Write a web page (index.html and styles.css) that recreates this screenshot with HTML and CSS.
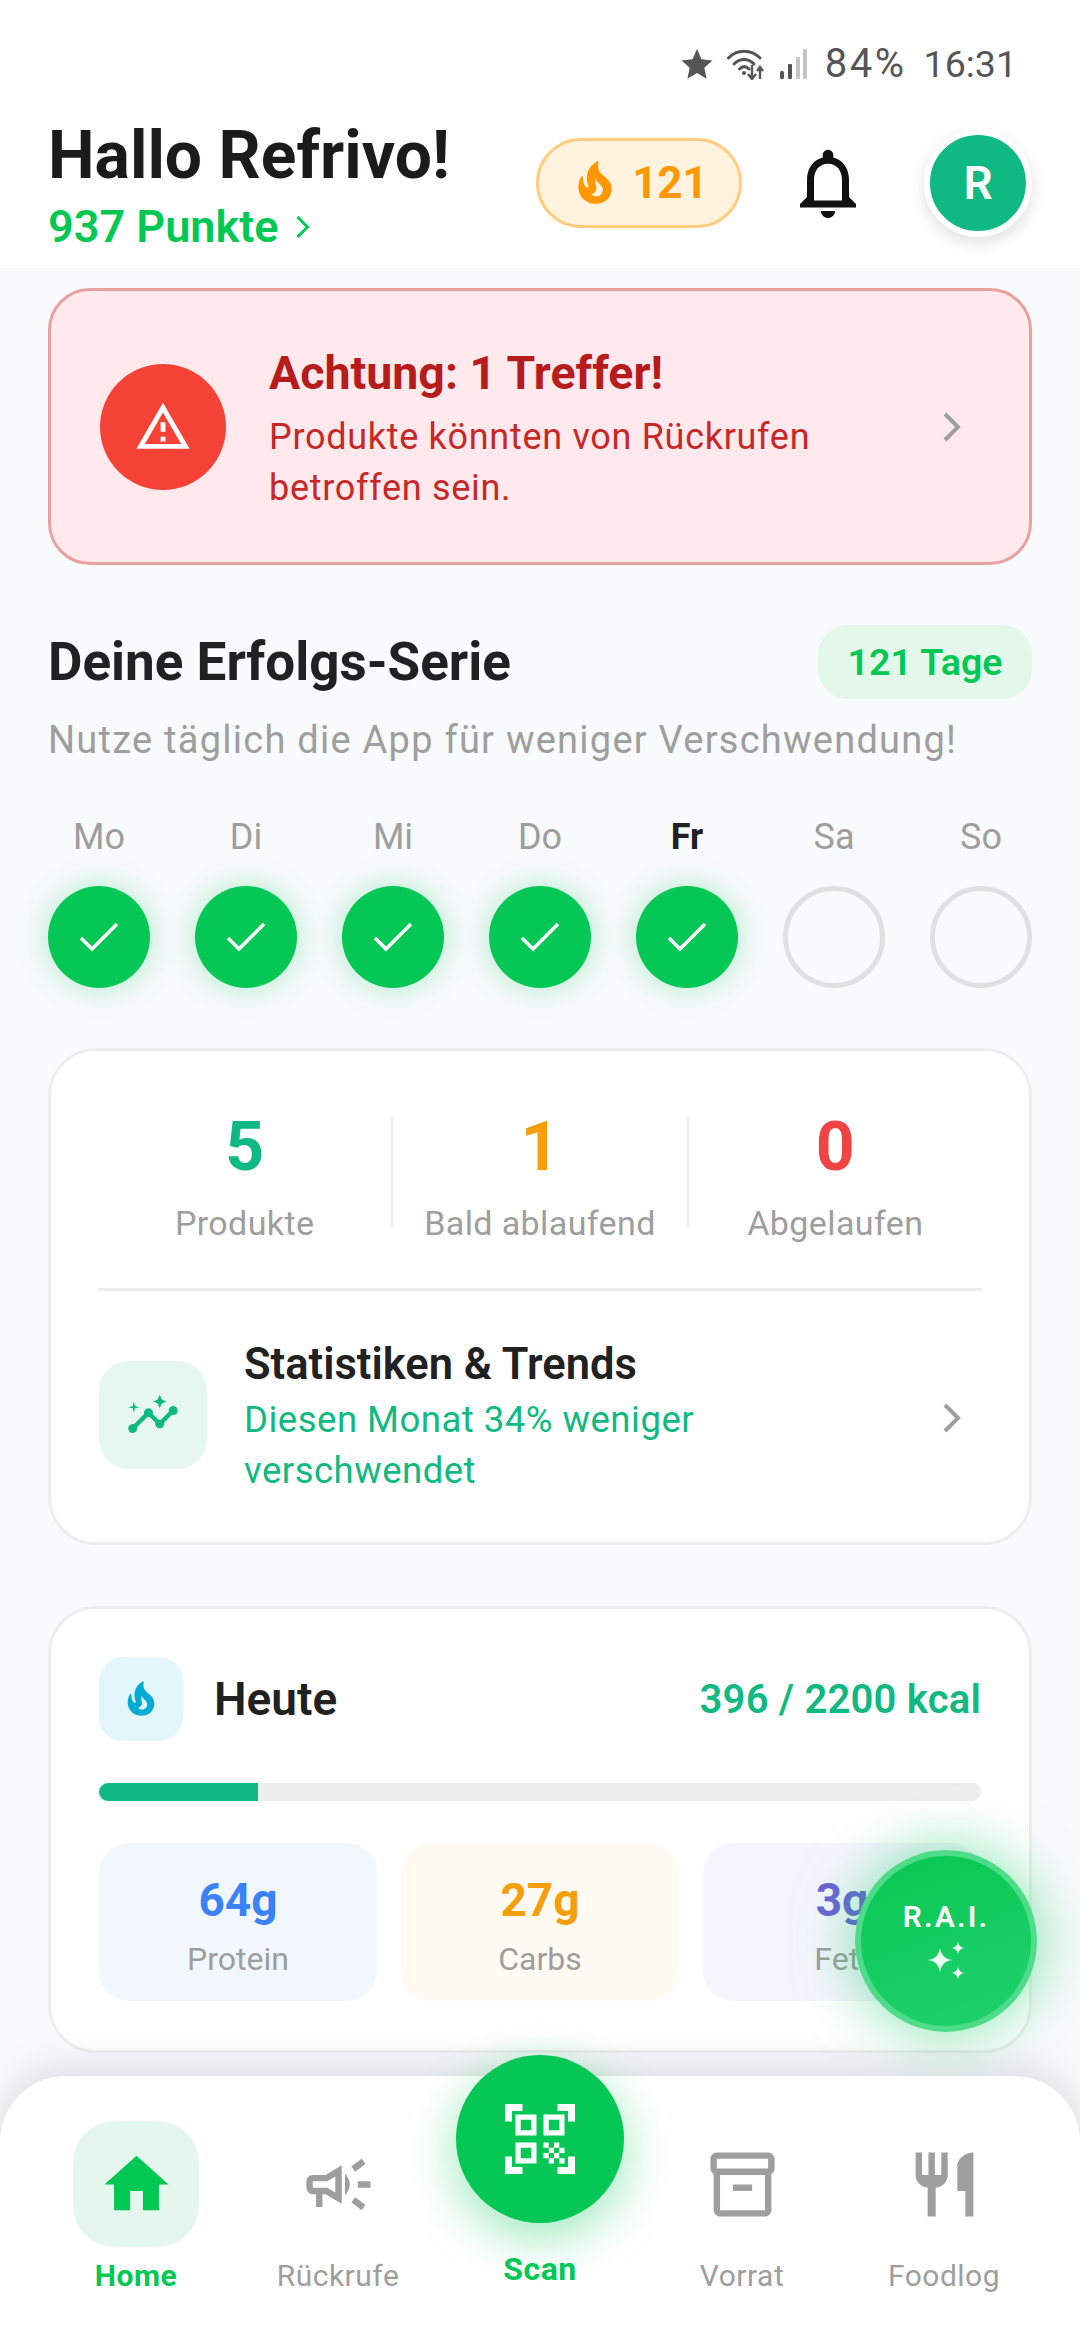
FILE: index.html
```html
<!DOCTYPE html>
<html lang="de">
<head>
<meta charset="utf-8">
<title>Refrivo Home</title>
<link rel="stylesheet" href="styles.css">
</head>
<body>
<div class="screen">
  <header class="header">
    <div class="status">
      <svg class="st-star" viewBox="0 0 24 24"><path d="M12 .8l3.4 7.6 8.2.9-6.1 5.5 1.7 8.2-7.2-4.2-7.2 4.2 1.7-8.2L.4 9.3l8.2-.9z"/></svg>
      <svg class="st-wifi" viewBox="0 0 38 32"><g fill="none" stroke="#555" stroke-width="3" stroke-linecap="round"><path d="M1.500 10C10 1 24 1 33 10"/><path d="M7 16c6-6 14-6 20 0"/><path d="M12.500 21c3-3 6.500-3 9.500 0"/></g><circle cx="17" cy="25" r="2" fill="#555"/><path d="M25 17v13M21 26l4 5 4-5M33 31V20M30 23l3-4 3 4" fill="none" stroke="#555" stroke-width="2.400"/></svg>
      <svg class="st-bars" viewBox="0 0 27 30"><rect x="0" y="22" width="4" height="8" rx="1.500" fill="#555"/><rect x="8" y="15" width="4" height="15" rx="1" fill="#555"/><rect x="16" y="8" width="4" height="22" rx="1" fill="#c4c4c4"/><rect x="23" y="0" width="4" height="30" rx="1" fill="#c4c4c4"/></svg>
      <span class="st-text st-batt">84%</span>
      <span class="st-text st-time">16:31</span>
    </div>
    <div class="top">
      <div class="hello">
        <h1 class="hello-title">Hallo Refrivo!</h1>
        <div class="points">937 Punkte
          <svg class="points-chev" viewBox="0 0 14 24"><path d="M2 2l10 10L2 22"/></svg>
        </div>
      </div>
      <div class="top-right">
        <div class="streak">
          <svg class="streak-flame" viewBox="0 0 24 24"><path d="M19.480 12.350c-1.570-4.080-7.160-4.300-5.810-10.230.1-.44-.37-.78-.75-.55C9.290 3.710 6.680 8 8.870 13.620c.18.46-.36.89-.75.59-1.810-1.370-2-3.340-1.840-4.750.06-.52-.62-.77-.91-.34C4.690 10.160 4 11.840 4 14.370c.38 5.600 5.110 7.320 6.810 7.540 2.430.31 5.060-.14 6.950-1.870 2.080-1.930 2.840-5.010 1.720-7.690zm-9.280 5.030c1.440-.35 2.180-1.390 2.380-2.310.33-1.430-.96-2.830-.09-5.090.33 1.870 3.270 3.040 3.270 5.080.08 2.530-2.660 4.700-5.560 2.320z"/></svg>
          <span>121</span>
        </div>
        <svg class="bell" viewBox="0 0 24 24"><path d="M12 22c1.100 0 2-.9 2-2h-4c0 1.100.9 2 2 2zm6-6v-5c0-3.070-1.640-5.640-4.500-6.320V4c0-.83-.67-1.500-1.500-1.500s-1.500.67-1.500 1.500v.68C7.630 5.360 6 7.920 6 11v5l-2 2v1h16v-1l-2-2zm-2 1H8v-6c0-2.480 1.510-4.500 4-4.500s4 2.020 4 4.500v6z"/></svg>
        <div class="avatar">R</div>
      </div>
    </div>
  </header>

  <main class="content">
    <section class="alert">
      <div class="alert-icon">
        <svg viewBox="0 0 24 24"><path d="M12 5.990L19.530 19H4.470L12 5.990M12 2L1 21h22L12 2zm1 14h-2v2h2v-2zm0-6h-2v4h2v-4z"/></svg>
      </div>
      <div class="alert-body">
        <div class="alert-title">Achtung: 1 Treffer!</div>
        <div class="alert-text">Produkte könnten von Rückrufen betroffen sein.</div>
      </div>
      <svg class="chev" viewBox="0 0 20 32"><path d="M3 3l13 13L3 29"/></svg>
    </section>

    <section class="streak-sec">
      <div class="sec-head">
        <h2 class="sec-title">Deine Erfolgs-Serie</h2>
        <div class="sec-badge">121 Tage</div>
      </div>
      <p class="sec-sub">Nutze täglich die App für weniger Verschwendung!</p>
      <div class="days">
        <div class="day"><span class="day-label">Mo</span><span class="day-dot done"><svg viewBox="0 0 40 30"><path d="M2 16l11 11L38 2"/></svg></span></div>
        <div class="day"><span class="day-label">Di</span><span class="day-dot done"><svg viewBox="0 0 40 30"><path d="M2 16l11 11L38 2"/></svg></span></div>
        <div class="day"><span class="day-label">Mi</span><span class="day-dot done"><svg viewBox="0 0 40 30"><path d="M2 16l11 11L38 2"/></svg></span></div>
        <div class="day"><span class="day-label">Do</span><span class="day-dot done"><svg viewBox="0 0 40 30"><path d="M2 16l11 11L38 2"/></svg></span></div>
        <div class="day"><span class="day-label today">Fr</span><span class="day-dot done"><svg viewBox="0 0 40 30"><path d="M2 16l11 11L38 2"/></svg></span></div>
        <div class="day"><span class="day-label">Sa</span><span class="day-dot"></span></div>
        <div class="day"><span class="day-label">So</span><span class="day-dot"></span></div>
      </div>
    </section>

    <section class="card stats-card">
      <div class="stats">
        <div class="stat"><div class="stat-num c-green">5</div><div class="stat-label">Produkte</div></div>
        <div class="stat"><div class="stat-num c-amber">1</div><div class="stat-label">Bald ablaufend</div></div>
        <div class="stat"><div class="stat-num c-red">0</div><div class="stat-label">Abgelaufen</div></div>
      </div>
      <div class="trend">
        <div class="trend-icon">
          <svg viewBox="0 0 24 24"><path d="M21 8c-1.450 0-2.260 1.440-1.930 2.510l-3.550 3.560c-.3-.09-.74-.09-1.040 0l-2.550-2.550C12.270 10.450 11.460 9 10 9c-1.450 0-2.270 1.440-1.930 2.520l-4.560 4.550C2.440 15.740 1 16.550 1 18c0 1.100.9 2 2 2 1.450 0 2.260-1.440 1.930-2.510l4.550-4.560c.3.09.74.09 1.040 0l2.550 2.550C12.730 16.550 13.540 18 15 18c1.450 0 2.270-1.440 1.930-2.520l3.560-3.550c1.070.33 2.510-.48 2.510-1.930 0-1.100-.9-2-2-2z"/><path d="M15 9l.94-2.070L18 6l-2.060-.93L15 3l-.92 2.070L12 6l2.080.93z"/><path d="M3.500 11L4 9l2-.5L4 8l-.5-2L3 8l-2 .5L3 9z"/></svg>
        </div>
        <div class="trend-body">
          <div class="trend-title">Statistiken &amp; Trends</div>
          <div class="trend-text">Diesen Monat 34% weniger verschwendet</div>
        </div>
        <svg class="chev" viewBox="0 0 20 32"><path d="M3 3l13 13L3 29"/></svg>
      </div>
    </section>

    <section class="card today-card">
      <div class="today-head">
        <div class="today-icon">
          <svg viewBox="0 0 24 24"><path d="M19.480 12.350c-1.570-4.080-7.160-4.300-5.810-10.230.1-.44-.37-.78-.75-.55C9.290 3.710 6.680 8 8.870 13.620c.18.46-.36.89-.75.59-1.810-1.370-2-3.340-1.840-4.750.06-.52-.62-.77-.91-.34C4.690 10.160 4 11.840 4 14.370c.38 5.600 5.110 7.320 6.810 7.540 2.430.31 5.060-.14 6.950-1.870 2.080-1.930 2.840-5.010 1.720-7.690zm-9.280 5.030c1.440-.35 2.180-1.390 2.380-2.310.33-1.430-.96-2.830-.09-5.090.33 1.870 3.270 3.040 3.270 5.080.08 2.530-2.660 4.700-5.560 2.320z"/></svg>
        </div>
        <div class="today-title">Heute</div>
        <div class="today-kcal">396 / 2200 kcal</div>
      </div>
      <div class="bar"><div class="bar-fill" style="width:18%"></div></div>
      <div class="tiles">
        <div class="tile t-blue"><div class="tile-num">64g</div><div class="tile-label">Protein</div></div>
        <div class="tile t-amber"><div class="tile-num">27g</div><div class="tile-label">Carbs</div></div>
        <div class="tile t-purple"><div class="tile-num">3g</div><div class="tile-label">Fett</div></div>
      </div>
    </section>
  </main>

  <button class="fab" type="button">
    <span class="fab-text">R.A.I.</span>
    <svg class="fab-icon" viewBox="0 0 40 44"><path d="M14 8c1.500 7.500 5 11 12 12-7 1-10.500 4.500-12 12-1.500-7.500-5-11-12-12 7-1 10.500-4.500 12-12z"/><path d="M32 2c.7 3.500 2.500 5.300 6 6-3.500.7-5.300 2.500-6 6-.7-3.500-2.500-5.300-6-6 3.500-.7 5.300-2.500 6-6z"/><path d="M32 27c.7 3.500 2.500 5.300 6 6-3.500.7-5.300 2.500-6 6-.7-3.500-2.500-5.300-6-6 3.500-.7 5.300-2.500 6-6z"/></svg>
  </button>

  <nav class="nav">
    <div class="nav-item active">
      <span class="nav-pill"><svg viewBox="0 0 24 24"><path d="M10 20v-6h4v6h5v-8h3L12 3 2 12h3v8z"/></svg></span>
      <span class="nav-label">Home</span>
    </div>
    <div class="nav-item">
      <span class="nav-pill"><svg viewBox="0 0 24 24"><path d="M18 11v2h4v-2h-4zm-2 6.610c.96.71 2.210 1.650 3.200 2.390.4-.53.8-1.070 1.200-1.600-.99-.74-2.240-1.680-3.200-2.400-.4.54-.8 1.080-1.200 1.610zM20.400 5.600c-.4-.53-.8-1.070-1.200-1.600-.99.74-2.240 1.680-3.200 2.400.4.53.8 1.070 1.200 1.600.96-.72 2.210-1.650 3.200-2.400zM4 9c-1.100 0-2 .9-2 2v2c0 1.100.9 2 2 2h1v4h2v-4h1l5 3V6L8 9H4zm5.030 1.710L11 9.530v4.940l-1.970-1.180-.48-.29H4v-2h4.550l.48-.29zM15.500 12c0-1.330-.58-2.530-1.500-3.350v6.690c.92-.81 1.500-2.010 1.500-3.340z"/></svg></span>
      <span class="nav-label">Rückrufe</span>
    </div>
    <div class="nav-item scan">
      <span class="scan-btn"><svg viewBox="0 0 24 24"><path d="M9.500 6.500v3h-3v-3h3M11 5H5v6h6V5zm-1.500 9.500v3h-3v-3h3M11 13H5v6h6v-6zm6.500-6.500v3h-3v-3h3M19 5h-6v6h6V5zm-6 8h1.500v1.500H13V13zm1.500 1.500H16V16h-1.500v-1.500zM16 13h1.500v1.500H16V13zm-3 3h1.500v1.500H13V16zm1.500 1.500H16V19h-1.500v-1.500zM16 16h1.500v1.500H16V16zm1.500-1.500H19V16h-1.500v-1.500zm0 3H19V19h-1.500v-1.500zM22 7h-2V4h-3V2h5v5zm0 15v-5h-2v3h-3v2h5zM2 22h5v-2H4v-3H2v5zM2 2v5h2V4h3V2H2z"/></svg></span>
      <span class="nav-label">Scan</span>
    </div>
    <div class="nav-item">
      <span class="nav-pill"><svg viewBox="0 0 24 24"><path d="M20 2H4c-1 0-2 .9-2 2v3.010c0 .72.43 1.340 1 1.690V20c0 1.100 1.100 2 2 2h14c.9 0 2-.9 2-2V8.700c.57-.35 1-.97 1-1.690V4c0-1.100-1-2-2-2zm-1 18H5V9h14v11zm1-13H4V4h16v3z"/><path d="M9 12h6v2H9z"/></svg></span>
      <span class="nav-label">Vorrat</span>
    </div>
    <div class="nav-item">
      <span class="nav-pill"><svg viewBox="0 0 24 24"><path d="M11 9H9V2H7v7H5V2H3v7c0 2.120 1.660 3.840 3.750 3.970V22h2.500v-9.030C11.340 12.840 13 11.120 13 9V2h-2v7zm5-3v8h2.500v8H21V2c-2.760 0-5 2.240-5 4z"/></svg></span>
      <span class="nav-label">Foodlog</span>
    </div>
  </nav>
</div>
</body>
</html>
```
FILE: styles.css
```css
* { box-sizing: border-box; }
html, body { margin: 0; padding: 0; }
body { font-family: Roboto, "Noto Sans", sans-serif; background: #f8fafc; }
h1, h2, p { margin: 0; }

.screen { position: relative; width: 1080px; height: 2340px; overflow: hidden; background: #f8fafc; }

/* header */
.header { background: #fff; height: 268px; }
.status { height: 110px; display: flex; align-items: center; justify-content: flex-end; padding: 18px 63px 0 0; color: #555; }
.st-star { width: 32px; height: 32px; fill: #555; margin-right: 14px; }
.st-wifi { width: 38px; height: 32px; margin-right: 15px; }
.st-bars { width: 27px; height: 30px; margin-right: 18px; }
.st-text { line-height: 44px; color: #555; }
.st-batt { margin-right: 17px; font-size: 40px; letter-spacing: 2.5px; }
.st-time { font-size: 37.5px; }

.top { height: 158px; display: flex; justify-content: space-between; align-items: center; padding: 0 48px 12px 48px; }
.hello { padding-top: 7px; }
.hello-title { font-size: 66px; line-height: 70px; font-weight: 700; color: #1a1c1a; }
.points { display: flex; align-items: center; gap: 16px; margin-top: 11px; font-size: 45px; line-height: 50px; font-weight: 600; color: #00c853; }
.points-chev { width: 15px; height: 24px; fill: none; stroke: #00c853; stroke-width: 3; }

.top-right { display: flex; align-items: center; }
.streak { display: flex; align-items: center; justify-content: center; gap: 12px; width: 206px; height: 90px; border-radius: 45px; background: #fff3e0; border: 3px solid #ffcc80; color: #ff9800; font-size: 44px; font-weight: 700; }
.streak-flame { width: 50px; height: 50px; fill: #ff9800; }
.bell { width: 84px; height: 84px; margin: 0 54px 0 44px; fill: #111; }
.avatar { width: 108px; height: 108px; border-radius: 50%; background: #10b981; border: 6px solid #fff; box-shadow: 0 6px 16px rgba(0,0,0,.12); color: #fff; font-size: 46px; font-weight: 600; display: flex; align-items: center; justify-content: center; }

/* main */
.content { padding: 20px 48px 0; }

.alert { display: flex; align-items: center; height: 277px; padding: 0 48px 0 49px; background: #ffe9ec; border: 3px solid #e8a0a0; border-radius: 42px; }
.alert-icon { flex: none; width: 126px; height: 126px; border-radius: 50%; background: #f44336; display: flex; align-items: center; justify-content: center; }
.alert-icon svg { width: 58px; height: 58px; fill: #fff; }
.alert-body { flex: 1; margin-left: 43px; padding: 6px 90px 0 0; }
.alert-title { font-size: 46.5px; line-height: 54px; font-weight: 700; color: #b71c1c; }
.alert-text { margin-top: 12px; font-size: 36px; line-height: 51px; color: #c62828; letter-spacing: .7px; }
.chev { flex: none; width: 20px; height: 32px; margin-right: 19px; fill: none; stroke: #9e9e9e; stroke-width: 4; }

.streak-sec { margin-top: 60px; }
.sec-head { display: flex; justify-content: space-between; align-items: center; height: 74px; }
.sec-title { font-size: 53px; line-height: 56px; font-weight: 700; color: #212121; }
.sec-badge { height: 74px; width: 214px; border-radius: 30px; background: #e3f7ea; color: #00c853; font-size: 37.5px; font-weight: 600; display: flex; align-items: center; justify-content: center; }
.sec-sub { margin-top: 16px; font-size: 38px; line-height: 50px; color: #9e9e9e; letter-spacing: 1.25px; }

.days { display: flex; justify-content: space-between; margin-top: 52px; }
.day { width: 102px; display: flex; flex-direction: column; align-items: center; gap: 29px; }
.day-label { font-size: 36px; line-height: 40px; color: #9e9e9e; }
.day-label.today { color: #212121; font-weight: 700; }
.day-dot { width: 102px; height: 102px; border-radius: 50%; border: 5px solid #e0e0e0; display: flex; align-items: center; justify-content: center; }
.day-dot.done { background: #05c756; border: 0; box-shadow: 0 0 30px rgba(0,200,83,.3); }
.day-dot svg { width: 40px; height: 30px; fill: none; stroke: #fff; stroke-width: 3.500; }

.card { background: #fff; border: 3px solid #eee; border-radius: 48px; padding: 0 48px; }

.stats-card { margin-top: 60px; height: 497px; }
.stats { display: flex; height: 240px; margin: 0 -1px; padding-top: 67px; border-bottom: 3px solid #eee; }
.stat { flex: 1; height: 108px; display: flex; flex-direction: column; align-items: center; border-left: 2px solid #eee; }
.stat:first-child { border-left: 0; }
.stat-num { font-size: 68px; line-height: 74px; margin-top: -8px; font-weight: 700; }
.stat-label { margin-top: 18px; font-size: 34px; line-height: 42px; color: #9e9e9e; white-space: nowrap; letter-spacing: .4px; }
.c-green { color: #10b981; }
.c-amber { color: #f59e0b; }
.c-red { color: #ef4444; }

.trend { display: flex; align-items: center; height: 254px; }
.trend-icon { flex: none; width: 108px; height: 108px; margin-top: -7px; border-radius: 30px; background: #e6f7f0; display: flex; align-items: center; justify-content: center; }
.trend-icon svg { width: 54px; height: 54px; fill: #10b981; }
.trend-body { flex: 1; margin-left: 37px; padding-right: 130px; }
.trend-title { font-size: 43.500px; line-height: 50px; font-weight: 600; color: #212121; }
.trend-text { margin-top: 4px; font-size: 36.5px; line-height: 51px; color: #10b981; letter-spacing: .5px; }

.today-card { margin-top: 61px; height: 447px; padding-top: 48px; }
.today-head { display: flex; align-items: center; height: 84px; }
.today-icon { flex: none; width: 84px; height: 84px; border-radius: 24px; background: #e3f6fb; display: flex; align-items: center; justify-content: center; }
.today-icon svg { width: 40px; height: 40px; fill: #00acd1; }
.today-title { flex: 1; margin-left: 31px; font-size: 46px; font-weight: 600; color: #212121; }
.today-kcal { font-size: 40px; font-weight: 600; color: #10b981; letter-spacing: .2px; }
.bar { height: 18px; margin-top: 42px; border-radius: 9px; background: #eee; overflow: hidden; }
.bar-fill { height: 100%; background: #10b981; }
.tiles { display: flex; gap: 24px; margin-top: 42px; }
.tile { flex: 1; height: 158px; padding-top: 5px; border-radius: 30px; display: flex; flex-direction: column; align-items: center; justify-content: center; }
.tile-num { font-size: 46px; line-height: 56px; font-weight: 700; }
.tile-label { margin-top: 13px; font-size: 32px; line-height: 36px; color: #9e9e9e; }
.t-blue { background: #f2f7fe; color: #3b82f6; }
.t-amber { background: #fffaf2; color: #f59e0b; }
.t-purple { background: #f6f5fe; color: #6c63d8; }

/* floating button */
.fab { position: absolute; left: 855px; top: 1850px; width: 182px; height: 182px; border-radius: 50%; border: 6px solid #4fdc8a; padding: 0; background: linear-gradient(160deg, #08c852, #20d16e); box-shadow: 0 0 60px rgba(0,200,83,.5); display: flex; flex-direction: column; align-items: center; justify-content: center; color: #fff; }
.fab-text { font-family: Roboto, sans-serif; font-size: 30px; line-height: 34px; font-weight: 600; letter-spacing: 2.2px; margin-top: 2px; }
.fab-icon { width: 40px; height: 44px; margin-top: 6px; fill: #ecfbf2; }

/* bottom nav */
.nav { position: absolute; left: 0; right: 0; bottom: 0; height: 264px; padding: 45px 35px 0; display: flex; background: #fff; border-radius: 66px 66px 0 0; box-shadow: 0 -8px 40px rgba(0,0,0,.12); }
.nav-item { width: 202px; display: flex; flex-direction: column; align-items: center; }
.nav-pill { width: 126px; height: 126px; border-radius: 42px; display: flex; align-items: center; justify-content: center; }
.nav-pill svg { width: 77px; height: 77px; fill: #9e9e9e; }
.nav-label { margin-top: 11px; font-size: 30px; line-height: 36px; color: #9e9e9e; letter-spacing: .5px; }
.nav-item.active .nav-pill { background: #e5f7ec; }
.nav-item.active .nav-pill svg { fill: #00c853; }
.nav-item.active .nav-label { color: #00c853; font-weight: 700; }
.scan { margin-top: -66px; }
.scan-btn { width: 168px; height: 168px; border-radius: 50%; background: #05c756; box-shadow: 0 14px 50px rgba(0,200,83,.4); display: flex; align-items: center; justify-content: center; }
.scan-btn svg { width: 84px; height: 84px; fill: #fff; }
.scan .nav-label { margin-top: 28px; font-size: 32px; font-weight: 700; color: #00c853; letter-spacing: .5px; }
```
